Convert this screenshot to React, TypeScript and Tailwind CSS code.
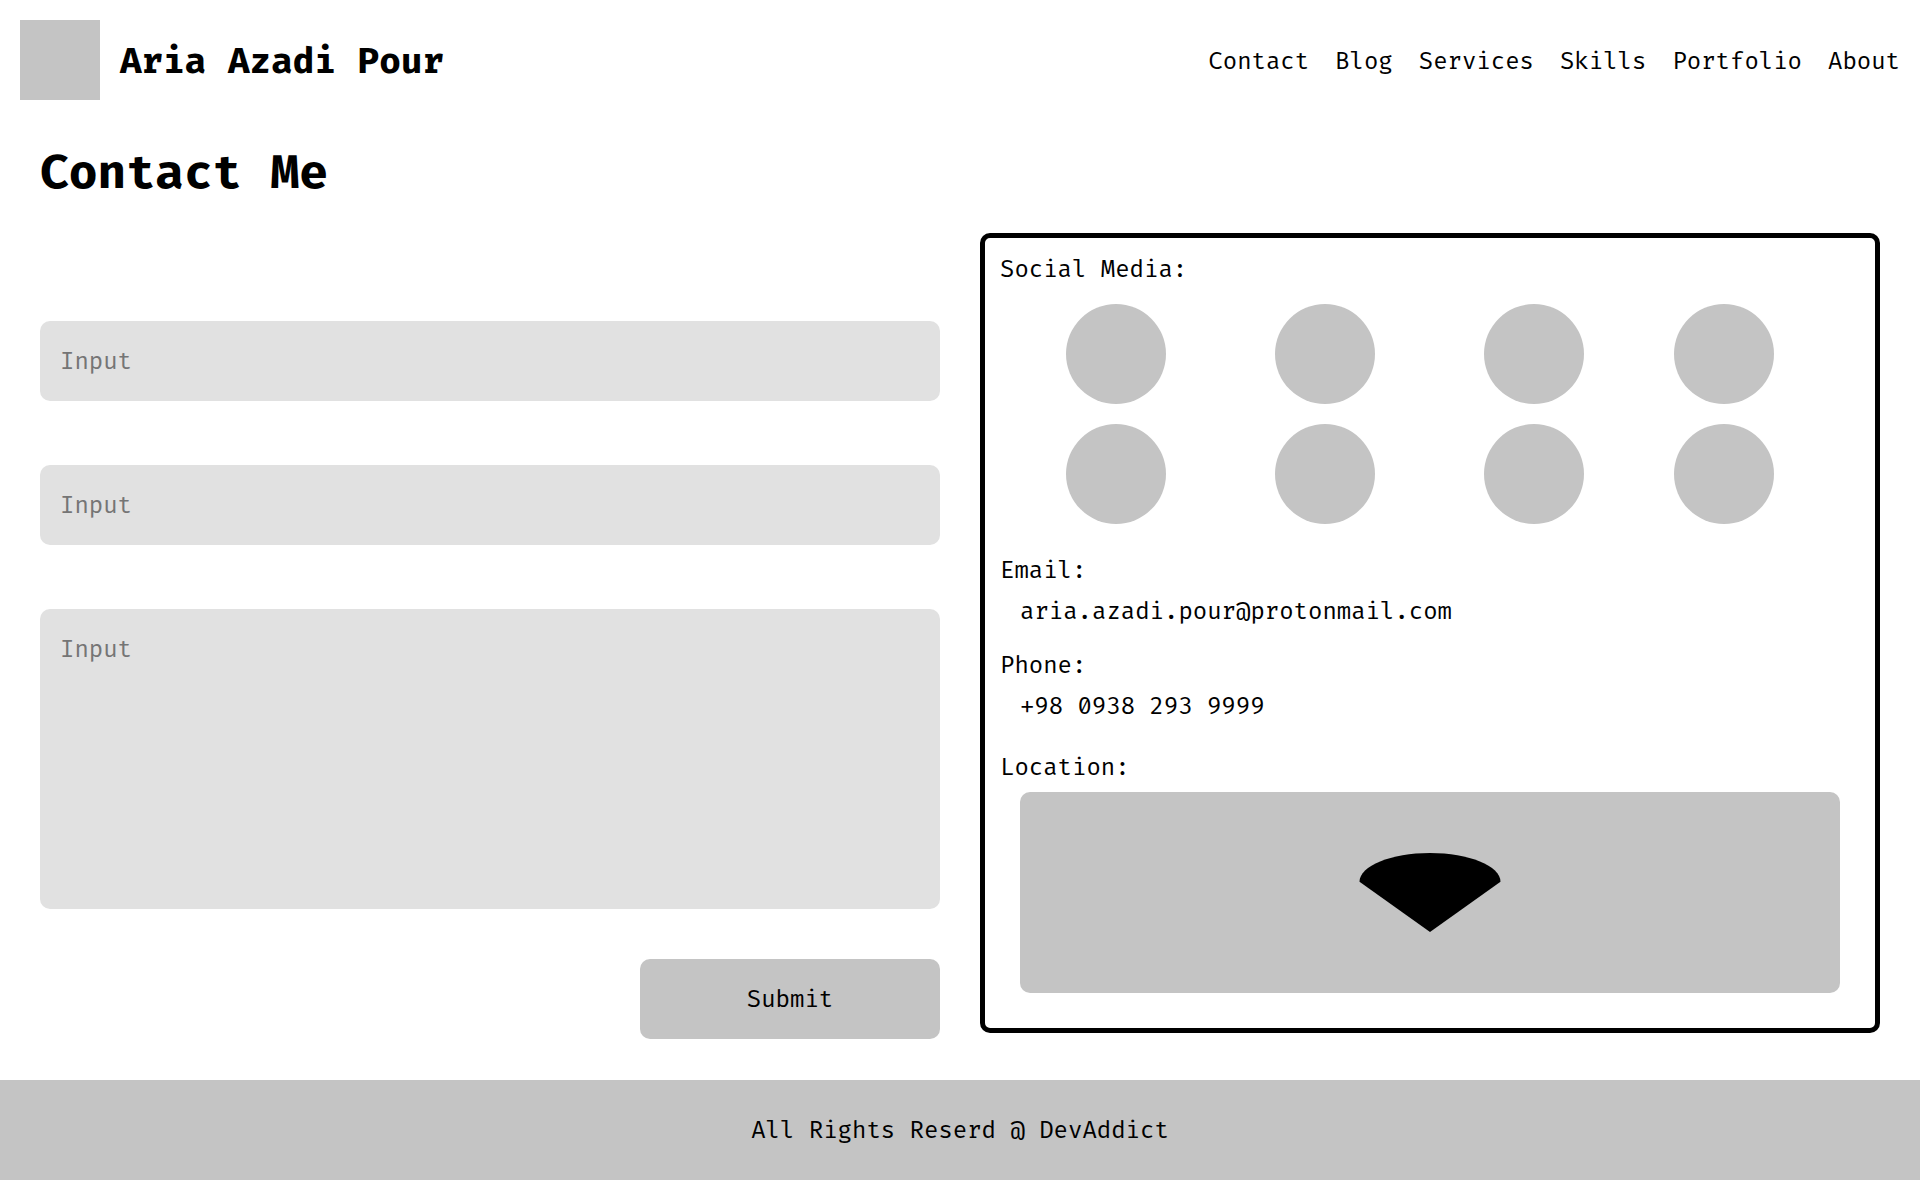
const navLinks = ["Contact", "Blog", "Services", "Skills", "Portfolio", "About"];
const socials = ["one", "two", "three", "four", "five", "six", "seven", "eight"];

function Header() {
  return (
    <header className="flex items-center justify-between p-5">
      <div className="flex items-center gap-5">
        <div className="size-20 shrink-0 bg-[#c4c4c4]" />
        <p className="pt-0.5 font-['Fira_Mono','Liberation_Mono',monospace] text-4xl font-bold">
          Aria Azadi Pour
        </p>
      </div>
      <nav className="flex flex-wrap gap-x-[26px] pt-0.5">
        {navLinks.map((name) => (
          <a key={name} href={`#${name.toLowerCase()}`}>
            {name}
          </a>
        ))}
      </nav>
    </header>
  );
}

function ContactForm() {
  const field =
    "block w-full rounded-[10px] bg-[#e1e1e1] px-5 leading-8 placeholder:text-[#757575]";
  return (
    <form
      className="flex flex-col gap-16 pt-[88px]"
      onSubmit={(event) => event.preventDefault()}
    >
      <input type="text" aria-label="Name" placeholder="Input" className={`${field} h-20`} />
      <input type="email" aria-label="Email" placeholder="Input" className={`${field} h-20`} />
      <div className="flex flex-col gap-[50px]">
        <textarea
          aria-label="Message"
          placeholder="Input"
          className={`${field} h-[300px] resize-none pt-6`}
        />
        <button type="submit" className="h-20 w-[300px] self-end rounded-[10px] bg-[#c4c4c4]">
          Submit
        </button>
      </div>
    </form>
  );
}

function LocationMap() {
  return (
    <div className="mx-5 flex h-[201px] items-center justify-center rounded-[10px] bg-[#c4c4c4]">
      <svg width="142" height="79" viewBox="0 0 142 79" aria-hidden="true">
        <path d="M71 79 L0.5 28.8 C0.5 12.9 32 0 71 0 C110 0 141.5 12.9 141.5 28.8 Z" fill="#000" />
      </svg>
    </div>
  );
}

function ContactPanel() {
  return (
    <section className="self-start rounded-[10px] border-5 border-black px-[15px] pt-[15px] pb-[35px]">
      <h2>Social Media:</h2>
      <div className="mt-[19px] mr-[86px] ml-[66px] grid grid-cols-[209fr_209fr_190fr_100px] gap-y-5">
        {socials.map((name) => (
          <a
            key={name}
            href={`#social-${name}`}
            aria-label={`Social profile ${name}`}
            className="size-[100px] rounded-full bg-[#c4c4c4]"
          />
        ))}
      </div>
      <h2 className="mt-[30px]">Email:</h2>
      <p className="mt-[9px] ml-5">aria.azadi.pour@protonmail.com</p>
      <h2 className="mt-[22px]">Phone:</h2>
      <p className="mt-[9px] ml-5">+98 0938 293 9999</p>
      <h2 className="mt-[29px] mb-[9px]">Location:</h2>
      <LocationMap />
    </section>
  );
}

export default function App() {
  return (
    <div className="min-h-screen bg-white font-['Fira_Code_Light','Fira_Mono','Liberation_Mono',monospace] text-2xl text-black">
      <Header />
      <main className="px-10 pt-6 pb-[41px]">
        <h1 className="mb-[33px] font-['Fira_Mono','Liberation_Mono',monospace] text-5xl leading-14 font-bold">
          Contact Me
        </h1>
        <div className="grid grid-cols-2 gap-10">
          <ContactForm />
          <ContactPanel />
        </div>
      </main>
      <footer className="flex h-25 items-center justify-center bg-[#c4c4c4]">
        All Rights Reserd @ DevAddict
      </footer>
    </div>
  );
}
